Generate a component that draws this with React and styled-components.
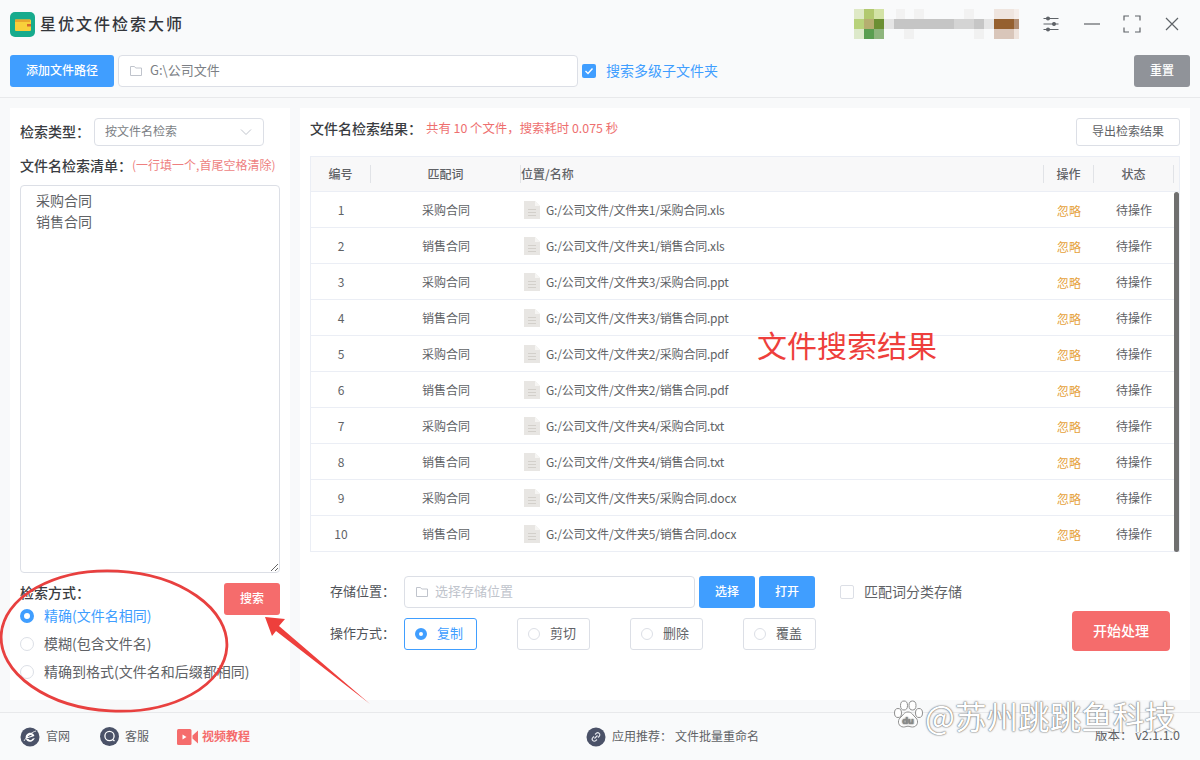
import React from 'react';
import styled, { createGlobalStyle } from 'styled-components';

const GlobalStyle = createGlobalStyle`
  html, body { margin: 0; padding: 0; }
  body {
    width: 1200px;
    height: 760px;
    overflow: hidden;
    background: #f8f9fa;
    font-family: "Noto Sans CJK SC", "Liberation Sans", sans-serif;
    color: #606266;
  }
  * { box-sizing: border-box; }
`;

const rows = [
  ['采购合同', '文件夹1', 'xls'],
  ['销售合同', '文件夹1', 'xls'],
  ['采购合同', '文件夹3', 'ppt'],
  ['销售合同', '文件夹3', 'ppt'],
  ['采购合同', '文件夹2', 'pdf'],
  ['销售合同', '文件夹2', 'pdf'],
  ['采购合同', '文件夹4', 'txt'],
  ['销售合同', '文件夹4', 'txt'],
  ['采购合同', '文件夹5', 'docx'],
  ['销售合同', '文件夹5', 'docx'],
];

const mosaic = [
  ['#dfe9c6', '#b2c96f', '#d3e3a6'],
  ['#b8d27b', '#b5ae70', '#6b8f33'],
  ['#dde9ca', '#5a9e50', '#8eb57d'],
];

function FolderIcon({ color = '#c0c4cc' }) {
  return (
    <svg width="14" height="14" viewBox="0 0 14 14" fill="none" stroke={color} strokeWidth="1">
      <path d="M1.5 2.5h4l1.2 1.5h5.8v7.5h-11z" />
    </svg>
  );
}

function Logo() {
  return (
    <svg width="25" height="25" viewBox="0 0 25 25">
      <rect width="25" height="25" rx="5" fill="#17ab8d" />
      <rect x="5" y="7.500" width="16" height="11.500" rx="1" fill="#f8cf3a" />
      <rect x="5" y="7.500" width="15" height="2.500" fill="#e9a62c" />
      <rect x="17" y="12" width="4" height="2.500" fill="#d8662e" />
    </svg>
  );
}

function UserBlur() {
  return (
    <svg width="165" height="30" viewBox="0 0 165 30">
      {mosaic.map((line, y) =>
        line.map((c, x) => <rect key={x + '-' + y} x={x * 10} y={y * 10} width="10" height="10" fill={c} />)
      )}
      <rect x="42" y="0" width="9" height="10" fill="#f2f2f2" />
      <rect x="60" y="0" width="10" height="10" fill="#f2f2f2" />
      <rect x="110" y="0" width="10" height="10" fill="#f2f2f2" />
      <rect x="50" y="20" width="10" height="10" fill="#f1f1f1" />
      <rect x="120" y="20" width="10" height="10" fill="#f1f1f1" />
      <rect x="30" y="10" width="110" height="10" fill="#e5e5e5" />
      <rect x="40" y="10" width="60" height="10" fill="#c5c5c5" />
      <rect x="100" y="10" width="20" height="10" fill="#d4d4d4" />
      <rect x="120" y="10" width="10" height="10" fill="#c6c6c6" />
      <rect x="140" y="0" width="20" height="10" fill="#efe5df" />
      <rect x="160" y="0" width="5" height="10" fill="#f5eeea" />
      <rect x="140" y="10" width="20" height="10" fill="#95602f" />
      <rect x="160" y="10" width="5" height="10" fill="#b18d72" />
      <rect x="140" y="20" width="20" height="10" fill="#d9c6ba" />
      <rect x="160" y="20" width="5" height="10" fill="#eee3dc" />
    </svg>
  );
}

function SlidersIcon() {
  return (
    <svg width="18" height="18" viewBox="0 0 18 18" fill="none" stroke="#5f6368" strokeWidth="1.2">
      <path d="M1.5 3.5h15M1.5 9h15M1.5 14.5h15" />
      <circle cx="6" cy="3.5" r="1.4" fill="#5f6368" />
      <circle cx="12" cy="9" r="1.4" fill="#5f6368" />
      <circle cx="6" cy="14.5" r="1.4" fill="#5f6368" />
    </svg>
  );
}

function MinIcon() {
  return (
    <svg width="18" height="18" viewBox="0 0 18 18" fill="none" stroke="#5f6368" strokeWidth="1.2">
      <path d="M1 9h16" />
    </svg>
  );
}

function MaxIcon() {
  return (
    <svg width="18" height="18" viewBox="0 0 18 18" fill="none" stroke="#5f6368" strokeWidth="1.2">
      <path d="M1 5.5V1h5M12 1h5v4.5M17 12.5V17h-5M6 17H1v-4.5" />
    </svg>
  );
}

function CloseIcon() {
  return (
    <svg width="14" height="14" viewBox="0 0 14 14" fill="none" stroke="#5f6368" strokeWidth="1.2">
      <path d="M1 1l12 12M13 1L1 13" />
    </svg>
  );
}

function FileIcon() {
  return (
    <svg width="16" height="18" viewBox="0 0 16 18">
      <path d="M0 0h11l5 5v13H0z" fill="#e8e6e3" />
      <path d="M11 0l5 5h-5z" fill="#f6f5f3" />
      <path d="M4 8.5h8M4 11.5h8M4 14.5h8" stroke="#d3d0cb" strokeWidth="1" />
    </svg>
  );
}

function SiteIcon() {
  return (
    <svg width="20" height="20" viewBox="0 0 20 20" fill="none">
      <circle cx="10" cy="10" r="9.500" fill="#4b5268" />
      <g transform="rotate(-18 10 10)">
        <path d="M5.500 10.500h9c0-3-2-4.700-4.400-4.700-2.600 0-4.600 2-4.600 4.600 0 2.700 2 4.300 4.600 4.300 1.800 0 3.200-.8 4-2.200h-2.400c-.4.500-.9.700-1.600.7-1.200 0-2-.7-2.100-1.700" fill="#fff" />
        <rect x="8" y="8.300" width="4" height="1" fill="#4b5268" />
      </g>
      <path d="M4 14c3-5 8-9 12-10" stroke="#fff" strokeWidth=".8" />
    </svg>
  );
}

function ServiceIcon() {
  return (
    <svg width="19" height="19" viewBox="0 0 19 19" fill="none">
      <circle cx="9.500" cy="9.500" r="9.500" fill="#4b5268" />
      <circle cx="9.500" cy="9" r="4.600" stroke="#fff" strokeWidth="1.300" />
      <path d="M12.500 12.500l2 1.500" stroke="#fff" strokeWidth="1.300" />
    </svg>
  );
}

function VideoIcon() {
  return (
    <svg width="21" height="16" viewBox="0 0 21 16">
      <rect width="14.500" height="16" rx="1.500" fill="#f56c6c" />
      <path d="M15.500 6.500L21 1.500v13l-5.500-5z" fill="#f56c6c" />
      <path d="M5.500 5.500l4 2.500-4 2.500z" fill="#fff" />
    </svg>
  );
}

function LinkIcon() {
  return (
    <svg width="20" height="20" viewBox="0 0 20 20" fill="none">
      <circle cx="10" cy="10" r="9.500" fill="#4b5268" />
      <path d="M8.500 11.500l3-3M9 7.500l1.200-1.200a2.100 2.100 0 013 3L12 10.500M11 12.500l-1.200 1.200a2.100 2.100 0 01-3-3L8 9.500" stroke="#e6e8ee" strokeWidth="1.100" />
    </svg>
  );
}

function PawIcon() {
  return (
    <svg width="30" height="30" viewBox="0 0 30 30" fill="#fff" stroke="#8f8f8f" strokeWidth="1">
      <ellipse cx="5" cy="13" rx="3.500" ry="4.500" />
      <ellipse cx="11" cy="5.500" rx="3.500" ry="4.500" />
      <ellipse cx="19.500" cy="5.500" rx="3.500" ry="4.500" />
      <ellipse cx="26" cy="13" rx="3.500" ry="4.500" />
      <path d="M15 12c4 0 5 3.500 8 6 3 3 1.500 9-3.500 9-2 0-3-.8-4.500-.8s-2.500.8-4.500.8c-5 0-6.500-6-3.500-9 3-2.500 4-6 8-6z" />
      <text x="15" y="24" fontSize="9.500" fontWeight="700" textAnchor="middle" fill="#8a8a8a" stroke="none" fontFamily="Liberation Sans, sans-serif">du</text>
    </svg>
  );
}

export default function App() {
  return (
    <>
      <GlobalStyle />
      <Page>
        <Header>
          <TitleBar>
            <Brand>
              <Logo />
              <AppName>星优文件检索大师</AppName>
            </Brand>
            <WindowTools>
              <UserBlur />
              <IconSlot $gap={23}><SlidersIcon /></IconSlot>
              <IconSlot $gap={23}><MinIcon /></IconSlot>
              <IconSlot $gap={22}><MaxIcon /></IconSlot>
              <IconSlot $gap={24}><CloseIcon /></IconSlot>
            </WindowTools>
          </TitleBar>
          <ToolBar>
            <Button $w={104} $h={32} $bg="#409eff">添加文件路径</Button>
            <PathBox>
              <FolderIcon />
              <RaisedText>G:\公司文件</RaisedText>
            </PathBox>
            <SubCheck>
              <CheckedBox>
                <svg width="10" height="10" viewBox="0 0 10 10" fill="none" stroke="#fff" strokeWidth="1.400">
                  <path d="M1.500 5l2.500 2.500 4.500-5" />
                </svg>
              </CheckedBox>
              <RaisedText>搜索多级子文件夹</RaisedText>
            </SubCheck>
            <Button $w={56} $h={32} $bg="#909399">重置</Button>
          </ToolBar>
        </Header>

        <Main>
          <LeftPanel>
            <TypeRow>
              <Label>检索类型：</Label>
              <SelectBox>
                <RaisedText>按文件名检索</RaisedText>
                <svg width="12" height="8" viewBox="0 0 12 8" fill="none" stroke="#c0c4cc" strokeWidth="1">
                  <path d="M1 1.500l5 5 5-5" />
                </svg>
              </SelectBox>
            </TypeRow>
            <ListHead>
              <Label>文件名检索清单：</Label>
              <Hint>(一行填一个,首尾空格清除)</Hint>
            </ListHead>
            <KeywordBox defaultValue={'采购合同\n销售合同'} />
            <MethodArea>
              <MethodList>
                <MethodLabel>检索方式：</MethodLabel>
                <MethodItem $on><Radio $on /><RaisedText>精确(文件名相同)</RaisedText></MethodItem>
                <MethodItem><Radio /><RaisedText>模糊(包含文件名)</RaisedText></MethodItem>
                <MethodItem><Radio /><RaisedText>精确到格式(文件名和后缀都相同)</RaisedText></MethodItem>
              </MethodList>
              <Button $w={56} $h={32} $bg="#f56c6c">搜索</Button>
            </MethodArea>
          </LeftPanel>

          <RightPanel>
            <ResultHead>
              <ResultTitle>
                <Label>文件名检索结果：</Label>
                <Summary>共有 10 个文件，搜索耗时 0.075 秒</Summary>
              </ResultTitle>
              <ExportButton>导出检索结果</ExportButton>
            </ResultHead>

            <Table>
              <HeadRow>
                <HeadCell $center $line>编号</HeadCell>
                <HeadCell $center $line>匹配词</HeadCell>
                <HeadCell $line>位置/名称</HeadCell>
                <HeadCell $center $line>操作</HeadCell>
                <HeadCell $center $line>状态</HeadCell>
              </HeadRow>
              {rows.map(([word, folder, ext], i) => (
                <BodyRow key={i}>
                  <Cell $center>{i + 1}</Cell>
                  <Cell $center>{word}</Cell>
                  <PathCell>
                    <FileIcon />
                    <span>{`G:/公司文件/${folder}/${word}.${ext}`}</span>
                  </PathCell>
                  <IgnoreCell>忽略</IgnoreCell>
                  <Cell $center>待操作</Cell>
                </BodyRow>
              ))}
              <ScrollThumb />
            </Table>

            <Bottom>
              <Form>
                <FormRow>
                  <FieldLabel>存储位置：</FieldLabel>
                  <SaveBox>
                    <FolderIcon />
                    <RaisedText>选择存储位置</RaisedText>
                  </SaveBox>
                  <Button $w={56} $h={32} $bg="#409eff">选择</Button>
                  <Button $w={56} $h={32} $bg="#409eff">打开</Button>
                  <SortCheck>
                    <EmptyBox />
                    <RaisedText>匹配词分类存储</RaisedText>
                  </SortCheck>
                </FormRow>
                <FormRow>
                  <FieldLabel>操作方式：</FieldLabel>
                  <Options>
                    <Option $on><Radio $on $small /><RaisedText>复制</RaisedText></Option>
                    <Option><Radio $small /><RaisedText>剪切</RaisedText></Option>
                    <Option><Radio $small /><RaisedText>删除</RaisedText></Option>
                    <Option><Radio $small /><RaisedText>覆盖</RaisedText></Option>
                  </Options>
                </FormRow>
              </Form>
              <StartButton>开始处理</StartButton>
            </Bottom>
          </RightPanel>
        </Main>

        <Footer>
          <FooterLeft>
            <FootLink><SiteIcon /><RaisedText>官网</RaisedText></FootLink>
            <FootLink><ServiceIcon /><RaisedText>客服</RaisedText></FootLink>
            <VideoLink><VideoIcon /><RaisedText>视频教程</RaisedText></VideoLink>
          </FooterLeft>
          <Recommend>
            <LinkIcon />
            <RaisedText>应用推荐：</RaisedText>
            <RaisedText>文件批量重命名</RaisedText>
          </Recommend>
          <Version>版本： v2.1.1.0</Version>
        </Footer>

        <Callout>文件搜索结果</Callout>
        <Marks width="1200" height="760" viewBox="0 0 1200 760">
          <ellipse cx="114" cy="641" rx="113" ry="70" fill="none" stroke="#e8403f" strokeWidth="2.800" transform="rotate(3 114 641)" />
          <path d="M265 617L285 619 279 626 370 704 276 631 272 636z" fill="#ee3f3c" />
        </Marks>
        <Watermark>
          <PawIcon />
          <span>@苏州跳跳鱼科技</span>
        </Watermark>
      </Page>
    </>
  );
}

const Page = styled.div`
  position: relative;
  width: 1200px;
  height: 760px;
  display: flex;
  flex-direction: column;
  overflow: hidden;
`;

const RaisedText = styled.span`
  padding-bottom: 3px;
  white-space: nowrap;
`;

const Header = styled.header`
  height: 98px;
  padding: 0 10px;
  border-bottom: 1px solid #e8e9eb;
  background: #f9fafb;
`;

const TitleBar = styled.div`
  height: 55px;
  display: flex;
  align-items: center;
  justify-content: space-between;
  padding-bottom: 7px;
`;

const Brand = styled.div`
  display: flex;
  align-items: center;
  gap: 5px;
`;

const AppName = styled.div`
  padding-bottom: 2px;
  font-size: 16px;
  font-weight: 500;
  letter-spacing: 2px;
  color: #33363b;
`;

const WindowTools = styled.div`
  display: flex;
  align-items: center;
  padding-right: 11px;
`;

const IconSlot = styled.span`
  display: flex;
  margin-left: ${p => p.$gap}px;
`;

const ToolBar = styled.div`
  display: flex;
  align-items: center;
`;

const Button = styled.button`
  width: ${p => p.$w}px;
  height: ${p => p.$h}px;
  flex: none;
  padding: 0 0 3px;
  border: 0;
  border-radius: 3px;
  background: ${p => p.$bg};
  color: #fff;
  font: 500 12px "Noto Sans CJK SC", sans-serif;
`;

const PathBox = styled.div`
  width: 460px;
  height: 32px;
  margin-left: 4px;
  display: flex;
  align-items: center;
  gap: 7px;
  padding-left: 10px;
  border: 1px solid #dcdfe6;
  border-radius: 4px;
  background: #fff;
  font-size: 13px;
  color: #7c7f85;
`;

const SubCheck = styled.div`
  flex: 1;
  margin-left: 4px;
  display: flex;
  align-items: center;
  gap: 10px;
  font-size: 14px;
  color: #409eff;
`;

const CheckedBox = styled.span`
  width: 14px;
  height: 14px;
  display: flex;
  align-items: center;
  justify-content: center;
  border-radius: 2px;
  background: #409eff;
`;

const Main = styled.main`
  height: 614px;
  padding: 10px 10px 12px;
  display: flex;
  gap: 10px;
`;

const LeftPanel = styled.section`
  width: 280px;
  padding: 10px 10px 0;
  background: #fff;
`;

const TypeRow = styled.div`
  display: flex;
  align-items: center;
  height: 28px;
`;

const Label = styled.span`
  padding-bottom: 3px;
  font-size: 14px;
  font-weight: 500;
  color: #3a3d42;
  white-space: nowrap;
`;

const MethodLabel = styled(Label)`
  height: 19px;
  padding: 0;
  line-height: 19px;
`;

const SelectBox = styled.div`
  width: 170px;
  height: 28px;
  margin-left: 4px;
  display: flex;
  align-items: center;
  justify-content: space-between;
  padding: 0 11px 0 10px;
  border: 1px solid #dcdfe6;
  border-radius: 4px;
  font-size: 12px;
  color: #7c7f85;
`;

const ListHead = styled.div`
  height: 39px;
  padding-top: 1px;
  display: flex;
  align-items: center;
`;

const Hint = styled.span`
  padding-bottom: 3px;
  font-size: 12px;
  color: #ee7f7f;
  white-space: nowrap;
`;

const KeywordBox = styled.textarea`
  display: block;
  width: 260px;
  height: 388px;
  padding: 4px 15px;
  border: 1px solid #dcdfe6;
  border-radius: 4px;
  outline: none;
  resize: vertical;
  font: 14px/21px "Noto Sans CJK SC", sans-serif;
  color: #606266;
`;

const MethodArea = styled.div`
  display: flex;
  justify-content: space-between;
  align-items: flex-start;
  padding-top: 10px;
`;

const MethodList = styled.div`
  display: flex;
  flex-direction: column;
  width: 204px;
  white-space: nowrap;
`;

const MethodItem = styled.div`
  height: 28px;
  display: flex;
  align-items: center;
  gap: 10px;
  font-size: 14px;
  color: ${p => (p.$on ? '#409eff' : '#606266')};
`;

const Radio = styled.span`
  width: ${p => (p.$small ? 12 : 14)}px;
  height: ${p => (p.$small ? 12 : 14)}px;
  flex: none;
  border-radius: 50%;
  border: ${p => (p.$on ? (p.$small ? '4px' : '4.500px') + ' solid #409eff' : '1px solid #dcdfe6')};
  background: #fff;
`;

const RightPanel = styled.section`
  width: 890px;
  padding: 10px 10px 0;
  background: #fff;
`;

const ResultHead = styled.div`
  height: 28px;
  display: flex;
  align-items: center;
  justify-content: space-between;
`;

const ResultTitle = styled.div`
  display: flex;
  align-items: center;
  margin-bottom: 5px;
`;

const Summary = styled.span`
  margin-left: 4px;
  padding-bottom: 3px;
  font-size: 12.400px;
  color: #ee6f6f;
`;

const ExportButton = styled.button`
  width: 104px;
  height: 28px;
  padding: 0 0 3px;
  border: 1px solid #dcdfe6;
  border-radius: 3px;
  background: #fff;
  font: 12px "Noto Sans CJK SC", sans-serif;
  color: #606266;
`;

const Table = styled.div`
  position: relative;
  margin-top: 10px;
  width: 870px;
  border: 1px solid #ebeef5;
  border-bottom: 0;
`;

const columns = '60px 150px 523px 50px 80px 1fr';

const HeadRow = styled.div`
  display: grid;
  grid-template-columns: ${columns};
  height: 35px;
  align-items: center;
  background: #f8f8f9;
  border-bottom: 1px solid #ebeef5;
`;

const HeadCell = styled.div`
  height: 18px;
  line-height: 18px;
  font-size: 12px;
  font-weight: 500;
  color: #606266;
  text-align: ${p => (p.$center ? 'center' : 'left')};
  border-right: ${p => (p.$line ? '1px solid #e1e3e7' : '0')};
`;

const BodyRow = styled.div`
  display: grid;
  grid-template-columns: ${columns};
  height: 36px;
  align-items: center;
  border-bottom: 1px solid #ebeef5;
`;

const Cell = styled.div`
  font-size: 12px;
  color: #606266;
  text-align: ${p => (p.$center ? 'center' : 'left')};
`;

const PathCell = styled(Cell)`
  display: flex;
  align-items: center;
  gap: 6px;
  padding-left: 3px;
  letter-spacing: -0.200px;
`;

const IgnoreCell = styled(Cell)`
  padding-top: 2px;
  color: #e6a23c;
  text-align: center;
`;

const ScrollThumb = styled.span`
  position: absolute;
  top: 35px;
  right: 0;
  width: 5px;
  bottom: 0;
  border-radius: 3px;
  background: #6f6f6f;
`;

const Bottom = styled.div`
  display: flex;
  justify-content: space-between;
  padding: 24px 10px 0 20px;
`;

const Form = styled.div`
  display: flex;
  flex-direction: column;
  gap: 10px;
`;

const FormRow = styled.div`
  display: flex;
  align-items: center;
  gap: 4px;
`;

const FieldLabel = styled.span`
  width: 70px;
  padding-bottom: 3px;
  font-size: 13px;
  color: #505359;
  white-space: nowrap;
`;

const SaveBox = styled.div`
  width: 291px;
  height: 32px;
  display: flex;
  align-items: center;
  gap: 6px;
  padding-left: 10px;
  border: 1px solid #dcdfe6;
  border-radius: 4px;
  font-size: 13px;
  color: #c0c4cc;
`;

const SortCheck = styled.div`
  margin-left: 21px;
  display: flex;
  align-items: center;
  gap: 10px;
  font-size: 14px;
  color: #606266;
`;

const EmptyBox = styled.span`
  width: 14px;
  height: 14px;
  border: 1px solid #dcdfe6;
  border-radius: 2px;
`;

const Options = styled.div`
  display: flex;
  gap: 40px;
`;

const Option = styled.div`
  width: 73px;
  height: 32px;
  display: flex;
  align-items: center;
  gap: 10px;
  padding-left: 10px;
  border: 1px solid ${p => (p.$on ? '#409eff' : '#dcdfe6')};
  border-radius: 3px;
  font-size: 13px;
  color: ${p => (p.$on ? '#409eff' : '#606266')};
`;

const StartButton = styled.button`
  width: 98px;
  height: 40px;
  margin-top: 35px;
  padding: 0 0 3px;
  border: 0;
  border-radius: 4px;
  background: #f56c6c;
  color: #fff;
  font: 500 14px "Noto Sans CJK SC", sans-serif;
`;

const Footer = styled.footer`
  flex: 1;
  display: flex;
  align-items: center;
  padding: 0 20px;
  border-top: 1px solid #e8e9eb;
  background: #f9fafb;
  font-size: 12px;
  color: #606266;
`;

const FooterLeft = styled.div`
  width: 566px;
  display: flex;
  align-items: center;
  gap: 30px;
`;

const FootLink = styled.div`
  display: flex;
  align-items: center;
  gap: 6px;
`;

const VideoLink = styled(FootLink)`
  gap: 4px;
  margin-left: -2px;
  font-weight: 700;
  color: #f56c6c;
`;

const Recommend = styled.div`
  flex: 1;
  display: flex;
  align-items: center;
  gap: 6px;
  span + span { margin-left: -3px; }
`;

const Version = styled.div`
  padding-bottom: 3px;
  font-size: 12.500px;
  line-height: 14px;
  white-space: nowrap;
`;

const Callout = styled.div`
  position: absolute;
  left: 757px;
  top: 324px;
  font-size: 30px;
  line-height: 40px;
  color: #ee3f3c;
  white-space: nowrap;
`;

const Marks = styled.svg`
  position: absolute;
  inset: 0;
  pointer-events: none;
`;

const Watermark = styled.div`
  position: absolute;
  left: 893px;
  top: 702px;
  height: 26px;
  display: flex;
  align-items: center;
  gap: 2px;
  font-size: 31.600px;
  line-height: 26px;
  color: #fff;
  text-shadow: 0 0 2px #666, 0 0 1px #666;
  white-space: nowrap;
`;
